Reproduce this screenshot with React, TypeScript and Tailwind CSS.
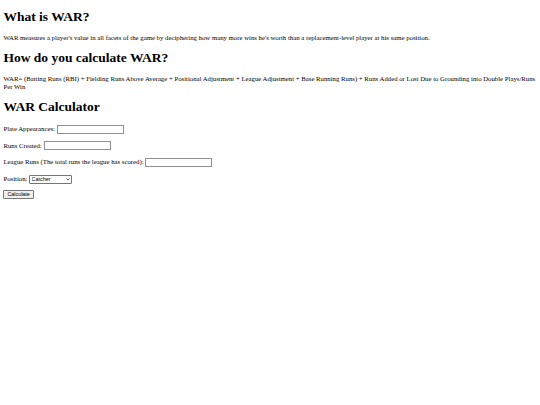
import { useState } from 'react';

const inputClass =
  'h-[9px] w-[67px] border-[0.5px] border-[#8f8f8f] bg-white align-middle text-[5.6px] font-["Liberation_Sans",Arial,sans-serif] outline-none';

export default function App() {
  const [position, setPosition] = useState('Catcher');

  return (
    <div className='min-h-[405px] bg-white px-[3.4px] font-["Liberation_Serif","Times_New_Roman",serif] text-[6.75px] leading-[1.15] text-black'>
      <div className="h-px" />
      <h1 className="mt-[8px] mb-[9px] text-[13.5px] font-bold leading-[1.15]">What is WAR?</h1>
      <p className="my-[6.75px]">
        WAR measures a player's value in all facets of the game by deciphering how many more wins he's worth than a
        replacement-level player at his same position.
      </p>
      <h1 className="mt-[9px] mb-[9px] text-[13.5px] font-bold leading-[1.15]">How do you calculate WAR?</h1>
      <p className="my-[6.75px]">
        WAR= (Batting Runs (RBI) + Fielding Runs Above Average + Positional Adjustment + League Adjustment + Base
        Running Runs) + Runs Added or Lost Due to Grounding into Double Plays/Runs Per Win
      </p>
      <h1 className="mt-[9px] mb-[9px] text-[13.5px] font-bold leading-[1.15]">WAR Calculator</h1>
      <form onSubmit={(e) => e.preventDefault()}>
        <p className="my-[6.75px] leading-[9.5px]">
          Plate Appearances: <input type="text" className={inputClass} />
        </p>
        <p className="my-[6.75px] leading-[9.5px]">
          Runs Created: <input type="text" className={inputClass} />
        </p>
        <p className="my-[6.75px] leading-[9.5px]">
          League Runs (The total runs the league has scored): <input type="text" className={inputClass} />
        </p>
        <p className="my-[6.75px] leading-[9.5px]">
          Position:{' '}
          <span className="relative inline-block align-middle">
            <select
              value={position}
              onChange={(e) => setPosition(e.target.value)}
              className='block h-[8.5px] w-[43px] appearance-none rounded-[1px] border-[0.5px] border-[#767676] bg-white py-0 pl-[1.5px] pr-[6px] text-[5.4px] font-["Liberation_Sans",Arial,sans-serif] leading-none'
            >
              <option>Catcher</option>
              <option>First Base</option>
              <option>Second Base</option>
              <option>Third Base</option>
              <option>Shortstop</option>
              <option>Left Field</option>
              <option>Center Field</option>
              <option>Right Field</option>
              <option>Designated Hitter</option>
            </select>
            <svg
              className="pointer-events-none absolute right-[2.5px] top-[3px] h-[2.5px] w-[4px]"
              viewBox="0 0 8 5"
            >
              <path d="M1 1 L4 4 L7 1" fill="none" stroke="#222" strokeWidth="1.6" />
            </svg>
          </span>
        </p>
        <button
          type="submit"
          className='h-[9px] rounded-[1px] border-[0.5px] border-[#767676] bg-[#efefef] px-[3px] align-middle text-[5.4px] font-["Liberation_Sans",Arial,sans-serif] leading-none'
        >
          Calculate
        </button>
      </form>
    </div>
  );
}
